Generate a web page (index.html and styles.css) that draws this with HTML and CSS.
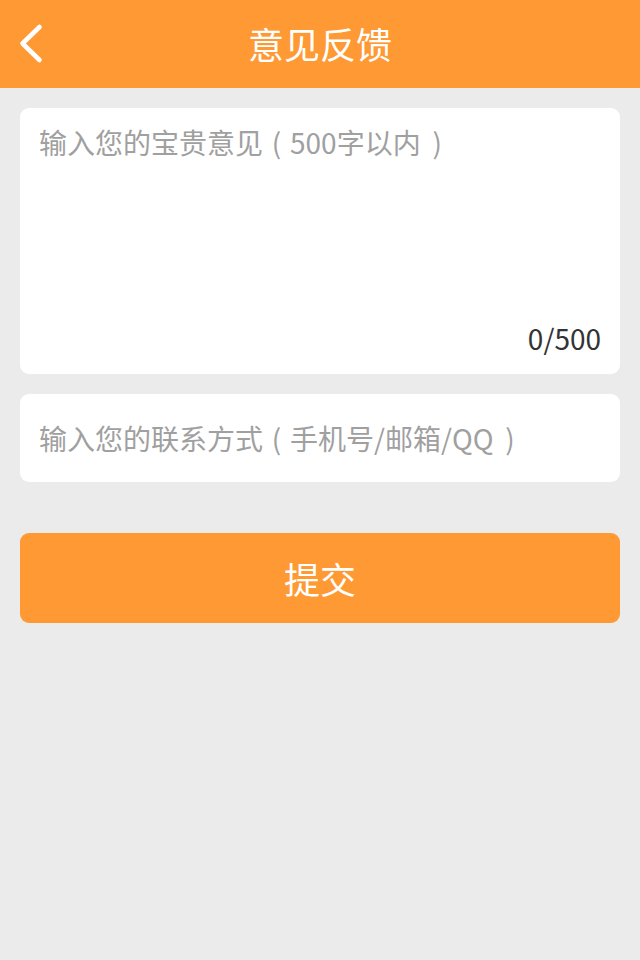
FILE: index.html
```html
<!DOCTYPE html>
<html lang="zh-CN">
<head>
<meta charset="utf-8">
<title>意见反馈</title>
<link rel="stylesheet" href="styles.css">
</head>
<body>
<header class="topbar">
  <span class="back">
    <svg width="30" height="44" viewBox="0 0 30 44"><path d="M23.5 5 L6.5 21.5 L23.5 38" fill="none" stroke="#fff" stroke-width="4.6" stroke-linecap="round" stroke-linejoin="round"/></svg>
  </span>
  <h1 class="title">意见反馈</h1>
</header>
<main class="content">
  <div class="card feedback">
    <div class="placeholder">输入您的宝贵意见<span class="paren">(</span>500字以内<span class="paren close">)</span></div>
    <div class="counter">0/500</div>
  </div>
  <div class="card contact">
    <div class="placeholder">输入您的联系方式<span class="paren">(</span>手机号/邮箱/QQ<span class="paren close">)</span></div>
  </div>
  <div class="submit">提交</div>
</main>
</body>
</html>
```
FILE: styles.css
```css
html, body {
  margin: 0;
  padding: 0;
}
body {
  background: #ebebeb;
  font-family: "Noto Sans CJK SC", "Noto Sans", sans-serif;
  width: 640px;
  min-height: 960px;
}
.topbar {
  height: 88px;
  background: #fe9933;
  display: flex;
  align-items: center;
  justify-content: center;
  position: relative;
}
.back {
  position: absolute;
  left: 16px;
  top: 22px;
  width: 30px;
  height: 44px;
}
.back svg {
  display: block;
}
.title {
  margin: 0;
  color: #fff;
  font-size: 36px;
  font-weight: normal;
  line-height: 88px;
  height: 88px;
  margin-top: -2px;
}
.content {
  padding: 20px 20px 0;
  display: flex;
  flex-direction: column;
}
.card {
  background: #fff;
  border-radius: 9px;
  padding: 0 20px;
}
.feedback {
  height: 266px;
  box-sizing: border-box;
  padding-top: 14px;
  padding-bottom: 16px;
  display: flex;
  flex-direction: column;
  justify-content: space-between;
}
.placeholder {
  color: #a0a0a0;
  font-size: 28px;
  line-height: 40px;
  white-space: nowrap;
  margin-left: -1px;
}
.paren {
  display: inline-block;
  width: 27px;
  text-align: center;
}
.paren.close {
  margin-left: 3px;
}
.counter {
  align-self: flex-end;
  color: #333;
  font-size: 28px;
  line-height: 40px;
  margin-right: -1px;
}
.contact {
  margin-top: 20px;
  height: 88px;
  display: flex;
  align-items: center;
}
.submit {
  margin-top: 51px;
  height: 90px;
  border-radius: 9px;
  background: #fe9933;
  color: #fff;
  font-size: 36px;
  display: flex;
  align-items: center;
  justify-content: center;
}
```
